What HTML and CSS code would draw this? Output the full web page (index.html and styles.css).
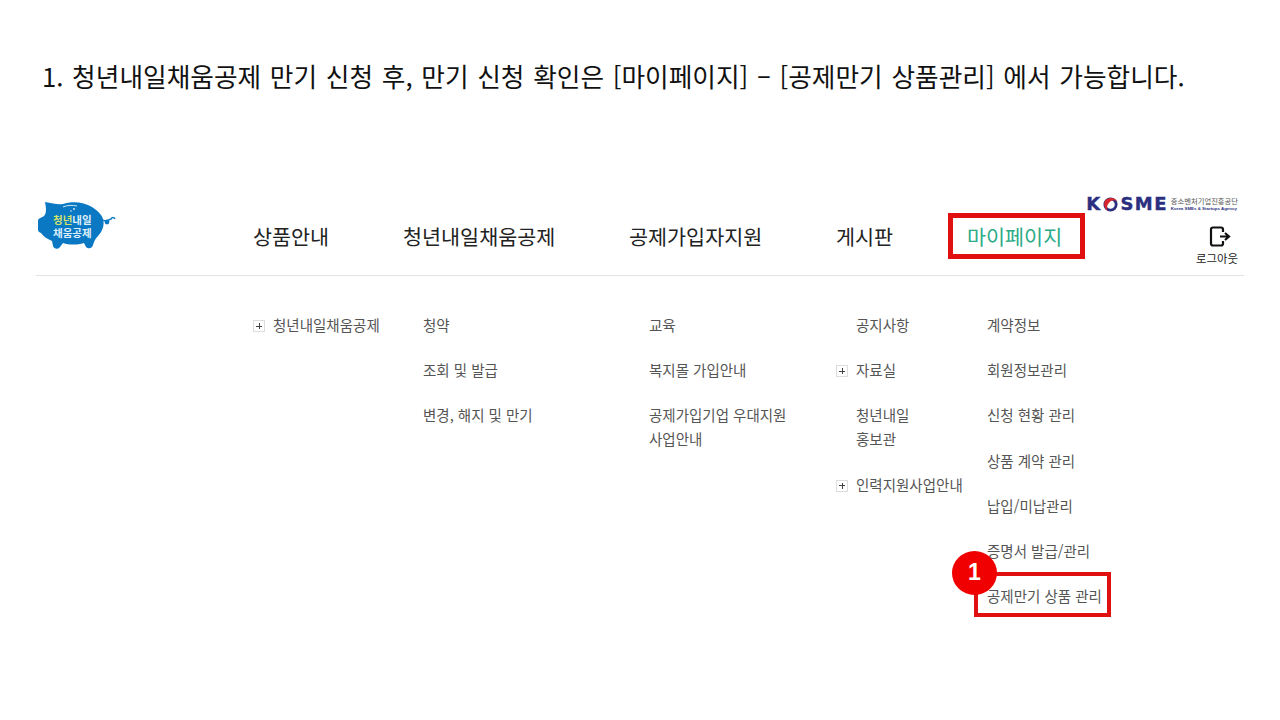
FILE: index.html
```html
<!DOCTYPE html>
<html lang="ko">

<head>
    <meta charset="UTF-8">
    <meta name="viewport" content="width=device-width, initial-scale=1.0">
    <title>공제만기 상품관리 안내</title>
    <link rel="stylesheet" href="styles.css">
</head>

<body>

    <p class="guide_text">1. 청년내일채움공제 만기 신청 후, 만기 신청 확인은 [마이페이지] – [공제만기 상품관리] 에서 가능합니다.</p>

    <div class="site">
        <div class="site_head">
            <div class="logo">
                <svg width="80" height="50" viewBox="0 0 80 50">
                    <path d="M7 2 C14 3 20 5 25 4 C34 1 46 2 54 7 C60 11 64 15 65 19 C67 25 64 32 60 36 C58 38 56 41 55 45 C54 49 50 49 48 47 L46 43 C39 45 31 45 25 43 L22 47 C20 50 16 49 15 46 L14 41 C9 39 5 36 3 33 C0 32 0 30 0 28 L0 21 C0 18 3 18 6 16 C9 13 8 7 7 2 Z" fill="#0b78c4" />
                    <path d="M65 20 C69 23 71 19 73 19 C74 17 76 17 77 19" fill="none" stroke="#0b78c4" stroke-width="1.4" />
                    <circle cx="69" cy="22" r="2.4" fill="#0b78c4" />
                    <path d="M25 7 C29 5 35 5 39 6" fill="none" stroke="#cfe6f6" stroke-width="1" />
                    <circle cx="36" cy="9" r="1" fill="#cfe6f6" />
                    <circle cx="33" cy="11" r="0.8" fill="#cfe6f6" />
                </svg>
                <div class="logo_text"><span class="logo_green">청년</span>내일<br>채움공제</div>
            </div>
            <nav class="gnb">
                <div class="gnb_item gnb_item1">상품안내</div>
                <div class="gnb_item gnb_item2">청년내일채움공제</div>
                <div class="gnb_item gnb_item3">공제가입자지원</div>
                <div class="gnb_item gnb_item4">게시판</div>
                <div class="gnb_item gnb_on">마이페이지</div>
            </nav>
            <div class="kosme">
                <span class="kosme_logo">K<svg class="kosme_o" width="19" height="15" viewBox="0 0 17 14"><circle cx="8.5" cy="7" r="5.3" fill="none" stroke="#2b2f7f" stroke-width="2.6" /><path d="M3 4 C6 0 12 0 15 4 C12 2 8 3 6 7 C5 9 5 11 6 13 C3 11 2 7 3 4 Z" fill="#d8262c" /></svg>SME</span>
                <span class="kosme_sub">
                    <span class="kosme_ko">중소벤처기업진흥공단</span>
                    <span class="kosme_en">Korea SMEs &amp; Startups Agency</span>
                </span>
            </div>
            <div class="logout">
                <svg class="logout_icon" width="22" height="21" viewBox="0 0 22 21">
                    <path d="M14 6 V3.5 Q14 1.5 12 1.5 H4 Q2 1.5 2 3.5 V17.5 Q2 19.5 4 19.5 H12 Q14 19.5 14 17.5 V15" fill="none" stroke="#111" stroke-width="2.2" />
                    <path d="M11 10.5 H20 M16 7 L20 10.5 L16 14" fill="none" stroke="#111" stroke-width="2.2" />
                </svg>
                <span>로그아웃</span>
            </div>
        </div>

        <div class="sub_menu">
            <div class="sub_col sub_col1">
                <div class="sub_item has_plus">청년내일채움공제</div>
            </div>
            <div class="sub_col sub_col2">
                <div class="sub_item">청약</div>
                <div class="sub_item">조회 및 발급</div>
                <div class="sub_item">변경, 해지 및 만기</div>
            </div>
            <div class="sub_col sub_col3">
                <div class="sub_item">교육</div>
                <div class="sub_item">복지몰 가입안내</div>
                <div class="sub_item">공제가입기업 우대지원<br>사업안내</div>
            </div>
            <div class="sub_col sub_col4">
                <div class="sub_item">공지사항</div>
                <div class="sub_item has_plus">자료실</div>
                <div class="sub_item">청년내일<br>홍보관</div>
                <div class="sub_item has_plus">인력지원사업안내</div>
            </div>
            <div class="sub_col sub_col5">
                <div class="sub_item">계약정보</div>
                <div class="sub_item">회원정보관리</div>
                <div class="sub_item">신청 현황 관리</div>
                <div class="sub_item">상품 계약 관리</div>
                <div class="sub_item">납입/미납관리</div>
                <div class="sub_item">증명서 발급/관리</div>
                <div class="sub_item sub_mark">
                    공제만기 상품 관리
                    <span class="num_badge">1</span>
                </div>
            </div>
        </div>
    </div>

</body>

</html>
```

FILE: styles.css
```css
* {
    box-sizing: border-box;
}

body {
    margin: 0;
    background: #fff;
    font-family: "Noto Sans CJK KR", "Noto Sans", sans-serif;
    color: #111;
}

.guide_text {
    margin: 0;
    padding: 57px 0 0 42px;
    height: 190px;
    font-size: 25.7px;
    line-height: 38px;
    word-spacing: 1.5px;
    font-weight: 400;
    color: #111;
    white-space: nowrap;
}

.site {
    margin: 0 36px;
}

.site_head {
    position: relative;
    height: 86px;
    border-bottom: 1px solid #e2e2e2;
}

.logo {
    position: absolute;
    left: 2px;
    top: 10px;
    width: 80px;
    height: 50px;
}

.logo_text {
    position: absolute;
    left: 15px;
    top: 14px;
    font-size: 10.5px;
    line-height: 12.5px;
    font-weight: 700;
    color: #dff0fb;
    white-space: nowrap;
}

.logo_green {
    color: #cfe36a;
}

.gnb {
    display: flex;
    padding: 28px 0 0 217px;
}

.gnb_item {
    font-size: 20.7px;
    line-height: 36px;
    height: 36px;
    color: #222;
    white-space: nowrap;
}

.gnb_item1 {
    width: 150px;
}

.gnb_item2 {
    width: 226px;
}

.gnb_item3 {
    width: 207px;
}

.gnb_item4 {
    width: 117px;
}

.gnb_on {
    width: 127px;
    padding-left: 14px;
    color: #2bab87;
    outline: 5px solid #e01010;
}

.kosme {
    position: absolute;
    right: 6px;
    top: 5px;
    display: flex;
    align-items: center;
    gap: 3px;
}

.kosme_logo {
    display: flex;
    align-items: center;
    font-family: "DejaVu Sans", sans-serif;
    font-size: 18px;
    line-height: 18px;
    font-weight: 700;
    letter-spacing: 1.4px;
    -webkit-text-stroke: 0.4px #2b2f7f;
    color: #2b2f7f;
}

.kosme_sub {
    display: flex;
    flex-direction: column;
}

.kosme_ko {
    font-size: 7.3px;
    line-height: 9px;
    color: #555;
    white-space: nowrap;
}

.kosme_en {
    font-family: "Liberation Sans", sans-serif;
    font-size: 4.4px;
    line-height: 6px;
    font-weight: 700;
    color: #2b2f7f;
    white-space: nowrap;
}

.logout {
    position: absolute;
    right: 6px;
    top: 36px;
    display: flex;
    flex-direction: column;
    align-items: center;
    gap: 3px;
    font-size: 11.4px;
    line-height: 16px;
    color: #222;
}

.logout_icon {
    margin-left: 5px;
}

.sub_menu {
    display: flex;
    padding: 37px 0 0 217px;
}

.sub_col1 {
    width: 170px;
}

.sub_col2 {
    width: 226px;
}

.sub_col3 {
    width: 187px;
}

.sub_col4 {
    width: 151px;
}

.sub_col1 .sub_item,
.sub_col4 .sub_item {
    padding-left: 20px;
}

.sub_item {
    position: relative;
    font-size: 14.5px;
    line-height: 24px;
    margin-bottom: 21.2px;
    color: #555;
    white-space: nowrap;
}

.has_plus::before {
    content: "";
    position: absolute;
    left: 0;
    top: 7px;
    width: 10px;
    height: 10px;
    border: 1px solid #ddd;
    background:
        linear-gradient(#444, #444) center / 6px 1px no-repeat,
        linear-gradient(#444, #444) center / 1px 6px no-repeat;
}

.sub_mark {
    width: 137px;
    height: 45px;
    margin: -12px 0 0 -13px;
    padding: 12px 0 0 13px;
    outline: 4px solid #e01010;
    outline-offset: -4px;
}

.num_badge {
    position: absolute;
    left: -22px;
    top: -21px;
    width: 45px;
    height: 44px;
    border-radius: 50%;
    background: #f00000;
    color: #fff;
    font-family: "Liberation Sans", sans-serif;
    font-size: 23px;
    font-weight: 700;
    line-height: 42px;
    text-align: center;
}
```
